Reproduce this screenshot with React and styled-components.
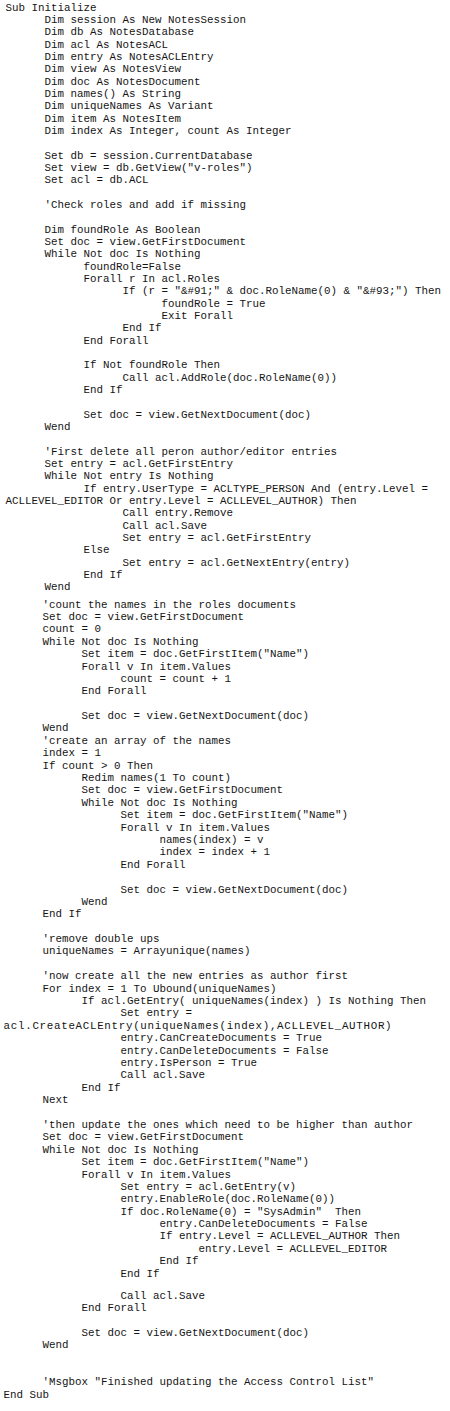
import React from "react";
import styled, { createGlobalStyle } from "styled-components";

const GlobalStyle = createGlobalStyle`
  html, body {
    margin: 0;
    padding: 0;
    background: #ffffff;
  }
`;

const Listing = styled.main`
  display: flex;
  flex-direction: column;
  padding: 1.8px 0 0 5.6px;
  font-family: "Courier New", "Nimbus Mono PS", "FreeMono", "Liberation Mono", monospace;
  font-size: 10.83px;
  color: #141414;
  background: #ffffff;
`;

const Block = styled.section`
  display: flex;
  flex-direction: column;
  margin-top: ${(p) => p.$gap || 0}px;
  margin-left: ${(p) => p.$shift || 0}px;
`;

const CodeLine = styled.div`
  height: ${(p) => p.$lh}px;
  line-height: ${(p) => p.$lh}px;
  padding-left: ${(p) => p.$indent * 39}px;
  letter-spacing: ${(p) => p.$stretch || 0}px;
  white-space: pre;
`;

const BlankLine = styled.div`
  height: ${(p) => p.$h}px;
`;

const first = [
  [0, "Sub Initialize"],
  [1, "Dim session As New NotesSession"],
  [1, "Dim db As NotesDatabase"],
  [1, "Dim acl As NotesACL"],
  [1, "Dim entry As NotesACLEntry"],
  [1, "Dim view As NotesView"],
  [1, "Dim doc As NotesDocument"],
  [1, "Dim names() As String"],
  [1, "Dim uniqueNames As Variant"],
  [1, "Dim item As NotesItem"],
  [1, "Dim index As Integer, count As Integer"],
  null,
  [1, "Set db = session.CurrentDatabase"],
  [1, 'Set view = db.GetView("v-roles")'],
  [1, "Set acl = db.ACL"],
  null,
  [1, "'Check roles and add if missing"],
  null,
  [1, "Dim foundRole As Boolean"],
  [1, "Set doc = view.GetFirstDocument"],
  [1, "While Not doc Is Nothing"],
  [2, "foundRole=False"],
  [2, "Forall r In acl.Roles"],
  [3, 'If (r = "&#91;" & doc.RoleName(0) & "&#93;") Then'],
  [4, "foundRole = True"],
  [4, "Exit Forall"],
  [3, "End If"],
  [2, "End Forall"],
  null,
  [2, "If Not foundRole Then"],
  [3, "Call acl.AddRole(doc.RoleName(0))"],
  [2, "End If"],
  null,
  [2, "Set doc = view.GetNextDocument(doc)"],
  [1, "Wend"],
  null,
  [1, "'First delete all peron author/editor entries"],
  [1, "Set entry = acl.GetFirstEntry"],
  [1, "While Not entry Is Nothing"],
  [2, "If entry.UserType = ACLTYPE_PERSON And (entry.Level ="],
  [0, "ACLLEVEL_EDITOR Or entry.Level = ACLLEVEL_AUTHOR) Then"],
  [3, "Call entry.Remove"],
  [3, "Call acl.Save"],
  [3, "Set entry = acl.GetFirstEntry"],
  [2, "Else"],
  [3, "Set entry = acl.GetNextEntry(entry)"],
  [2, "End If"],
  [1, "Wend"],
];

const second = [
  [1, "'count the names in the roles documents"],
  [1, "Set doc = view.GetFirstDocument"],
  [1, "count = 0"],
  [1, "While Not doc Is Nothing"],
  [2, 'Set item = doc.GetFirstItem("Name")'],
  [2, "Forall v In item.Values"],
  [3, "count = count + 1"],
  [2, "End Forall"],
  null,
  [2, "Set doc = view.GetNextDocument(doc)"],
  [1, "Wend"],
  [1, "'create an array of the names"],
  [1, "index = 1"],
  [1, "If count > 0 Then"],
  [2, "Redim names(1 To count)"],
  [2, "Set doc = view.GetFirstDocument"],
  [2, "While Not doc Is Nothing"],
  [3, 'Set item = doc.GetFirstItem("Name")'],
  [3, "Forall v In item.Values"],
  [4, "names(index) = v"],
  [4, "index = index + 1"],
  [3, "End Forall"],
  null,
  [3, "Set doc = view.GetNextDocument(doc)"],
  [2, "Wend"],
  [1, "End If"],
  null,
  [1, "'remove double ups"],
  [1, "uniqueNames = Arrayunique(names)"],
  null,
  [1, "'now create all the new entries as author first"],
  [1, "For index = 1 To Ubound(uniqueNames)"],
  [2, "If acl.GetEntry( uniqueNames(index) ) Is Nothing Then"],
  [3, "Set entry ="],
  [0, "acl.CreateACLEntry(uniqueNames(index),ACLLEVEL_AUTHOR)", 0.7],
  [3, "entry.CanCreateDocuments = True"],
  [3, "entry.CanDeleteDocuments = False"],
  [3, "entry.IsPerson = True"],
  [3, "Call acl.Save"],
  [2, "End If"],
  [1, "Next"],
  null,
  [1, "'then update the ones which need to be higher than author"],
  [1, "Set doc = view.GetFirstDocument"],
  [1, "While Not doc Is Nothing"],
  [2, 'Set item = doc.GetFirstItem("Name")'],
  [2, "Forall v In item.Values"],
  [3, "Set entry = acl.GetEntry(v)"],
  [3, "entry.EnableRole(doc.RoleName(0))"],
  [3, 'If doc.RoleName(0) = "SysAdmin"  Then'],
  [4, "entry.CanDeleteDocuments = False"],
  [4, "If entry.Level = ACLLEVEL_AUTHOR Then"],
  [5, "entry.Level = ACLLEVEL_EDITOR"],
  [4, "End If"],
  [3, "End If"],
  "short",
  [3, "Call acl.Save"],
  [2, "End Forall"],
  null,
  [2, "Set doc = view.GetNextDocument(doc)"],
  [1, "Wend"],
  null,
  null,
  [1, "'Msgbox \"Finished updating the Access Control List\""],
  [0, "End Sub"],
];

function renderLines(list, lh) {
  return list.map((item, i) => {
    if (item === null) return <BlankLine key={i} $h={lh} />;
    if (item === "short") return <BlankLine key={i} $h={9.5} />;
    const [indent, text, stretch] = item;
    return (
      <CodeLine key={i} $indent={indent} $lh={lh} $stretch={stretch}>
        {text}
      </CodeLine>
    );
  });
}

export default function App() {
  return (
    <>
      <GlobalStyle />
      <Listing>
        <Block>{renderLines(first, 12.34)}</Block>
        <Block $gap={5} $shift={-2}>
          {renderLines(second, 12.4)}
        </Block>
      </Listing>
    </>
  );
}
